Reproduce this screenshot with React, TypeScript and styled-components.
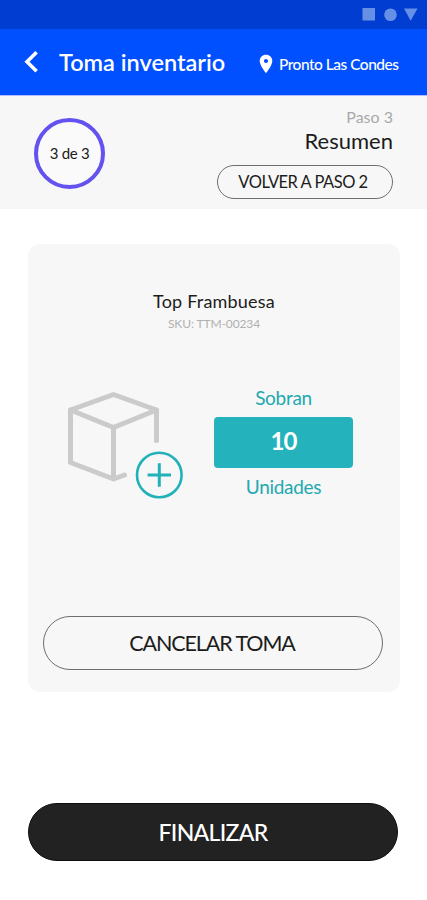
import React from "react";
import styled, { createGlobalStyle } from "styled-components";

const App: React.FC = () => {
  return (
    <>
      <GlobalStyle />
      <Screen>
        <StatusBar>
          <svg width="56" height="14" viewBox="0 0 56 14">
            <rect x="0.5" y="1" width="12.5" height="12.5" />
            <circle cx="28.5" cy="7.7" r="6.3" />
            <path d="M42 1.6H55.5L48.7 13.7Z" />
          </svg>
        </StatusBar>

        <AppBar>
          <BackButton aria-label="Volver">
            <svg width="15" height="24" viewBox="0 0 15 24">
              <path d="M13.6 2.2L4 11.7L13.6 21.2" />
            </svg>
          </BackButton>
          <Title>Toma inventario</Title>
          <Location>
            <svg width="14" height="20" viewBox="0 0 14 20">
              <path
                fillRule="evenodd"
                d="M7 0.8C3.4 0.8 0.7 3.5 0.7 7C0.7 11.6 7 19.2 7 19.2S13.3 11.6 13.3 7C13.3 3.5 10.6 0.8 7 0.8ZM7 4.9A2.1 2.1 0 1 1 7 9.1A2.1 2.1 0 1 1 7 4.9Z"
              />
            </svg>
            <span>Pronto Las Condes</span>
          </Location>
        </AppBar>

        <StepBar>
          <Progress>3 de 3</Progress>
          <StepInfo>
            <StepNumber>Paso 3</StepNumber>
            <StepName>Resumen</StepName>
            <StepButton>VOLVER A PASO 2</StepButton>
          </StepInfo>
        </StepBar>

        <Card>
          <ProductName>Top Frambuesa</ProductName>
          <Sku>SKU: TTM-00234</Sku>
          <Summary>
            <BoxIcon />
            <Count>
              <CountLabel>Sobran</CountLabel>
              <CountValue>10</CountValue>
              <CountLabel>Unidades</CountLabel>
            </Count>
          </Summary>
          <CancelButton>CANCELAR TOMA</CancelButton>
        </Card>

        <FinishButton>FINALIZAR</FinishButton>
      </Screen>
    </>
  );
};

export default App;

const BoxIcon: React.FC = () => (
  <svg width="118" height="118" viewBox="0 -6.5 118 118" fill="none">
    <g
      stroke="#cbcbcb"
      strokeWidth="5"
      strokeLinecap="round"
      strokeLinejoin="round"
    >
      <path d="M89.5 49V18.5L46.5 3L3.5 18.5V71L46.5 87.5L57.5 83.5" />
      <path d="M3.5 18.5L46.5 36L89.5 18.5M46.5 36V87" />
    </g>
    <g stroke="#22b1b9" strokeWidth="2.6">
      <circle cx="92.3" cy="83.5" r="22.3" />
      <path strokeWidth="3" d="M92.3 71.8V95.2M80.6 83.5H104" />
    </g>
  </svg>
);

const GlobalStyle = createGlobalStyle`
  * {
    box-sizing: border-box;
  }

  body {
    margin: 0;
    background-color: #fff;
    font-family: Lato, "Liberation Sans", sans-serif;
    color: #1c1c1c;
  }

  button {
    padding: 0;
    font-family: inherit;
  }

  svg {
    display: block;
    flex: none;
  }
`;

const Screen = styled.div`
  display: flex;
  flex-direction: column;
  width: 427px;
  height: 900px;
  overflow: hidden;
  white-space: nowrap;
`;

const StatusBar = styled.div`
  display: flex;
  justify-content: flex-end;
  height: 29px;
  padding: 7px 9px 0 0;
  background-color: #003dd0;

  svg {
    fill: #6690e6;
  }
`;

const AppBar = styled.header`
  display: flex;
  align-items: center;
  height: 67px;
  padding: 0 0 1px 23px;
  background-color: #0050ff;
  border-bottom: 1px solid #b3bcff;
  color: #fff;
`;

const BackButton = styled.button`
  border: 0;
  background: none;

  path {
    fill: none;
    stroke: #fff;
    stroke-width: 3.6;
  }
`;

const Title = styled.h1`
  width: 200px;
  margin: 0 0 0 21px;
  font-size: 23.5px;
  font-weight: 600;
  line-height: 28px;
`;

const Location = styled.div`
  display: flex;
  align-items: center;
  gap: 6px;
  padding-top: 5px;
  font-size: 15.5px;
  font-weight: 500;
  line-height: 20px;
  letter-spacing: -0.5px;

  svg {
    fill: #fff;
  }
`;

const StepBar = styled.section`
  display: flex;
  justify-content: space-between;
  height: 113px;
  padding: 0 34px;
  background-color: #f7f7f7;
`;

const Progress = styled.div`
  display: flex;
  align-items: center;
  justify-content: center;
  width: 71px;
  height: 71px;
  margin-top: 22px;
  padding-bottom: 2px;
  border: 4px solid #6351f0;
  border-radius: 50%;
  background-color: #fafafa;
  font-size: 15px;
  letter-spacing: -0.3px;
`;

const StepInfo = styled.div`
  display: flex;
  flex-direction: column;
  align-items: flex-end;
  padding-top: 11px;
`;

const StepNumber = styled.div`
  color: #a9a9a9;
  font-size: 16px;
  line-height: 20px;
`;

const StepName = styled.div`
  font-size: 22px;
  line-height: 28px;
`;

const StepButton = styled.button`
  width: 176px;
  height: 34px;
  margin-top: 10px;
  padding: 0 4px 1px 0;
  border: 1px solid #6d6d6d;
  border-radius: 17px;
  background: none;
  color: #1c1c1c;
  font-size: 16.5px;
  letter-spacing: -0.5px;
`;

const Card = styled.main`
  display: flex;
  flex-direction: column;
  align-items: center;
  width: 372px;
  height: 448px;
  margin: 35px 0 0 28px;
  padding: 45px 15px 0;
  border-radius: 12px;
  background-color: #f7f7f7;
`;

const ProductName = styled.div`
  font-size: 18px;
  line-height: 24px;
  letter-spacing: 0.2px;
`;

const Sku = styled.div`
  margin-top: 3px;
  color: #b0b0b0;
  font-size: 12px;
  line-height: 16px;
  letter-spacing: -0.1px;
`;

const Summary = styled.div`
  display: flex;
  gap: 29px;
  width: 100%;
  padding: 53px 0 0 24px;
`;

const Count = styled.div`
  display: flex;
  flex-direction: column;
  align-items: center;
`;

const CountLabel = styled.div`
  color: #22a9b0;
  font-size: 19px;
  line-height: 26px;
  letter-spacing: -0.3px;
`;

const CountValue = styled.div`
  width: 139px;
  height: 51px;
  margin: 6px 0;
  border-radius: 4px;
  background-color: #24b3bc;
  color: #fff;
  font-size: 24px;
  font-weight: 700;
  line-height: 48px;
  letter-spacing: -1px;
  text-align: center;
`;

const CancelButton = styled.button`
  width: 340px;
  height: 54px;
  margin: auto 2px 22px 0;
  padding: 0 2px 1px 0;
  border: 1px solid #6d6d6d;
  border-radius: 27px;
  background: none;
  color: #1c1c1c;
  font-size: 21.5px;
  letter-spacing: -1.1px;
`;

const FinishButton = styled.button`
  width: 370px;
  height: 58px;
  margin: 111px 0 0 28px;
  border: 1px solid #0c0c0c;
  border-radius: 29px;
  background-color: #222;
  color: #fff;
  font-size: 23px;
  font-weight: 500;
  letter-spacing: -0.7px;
`;
